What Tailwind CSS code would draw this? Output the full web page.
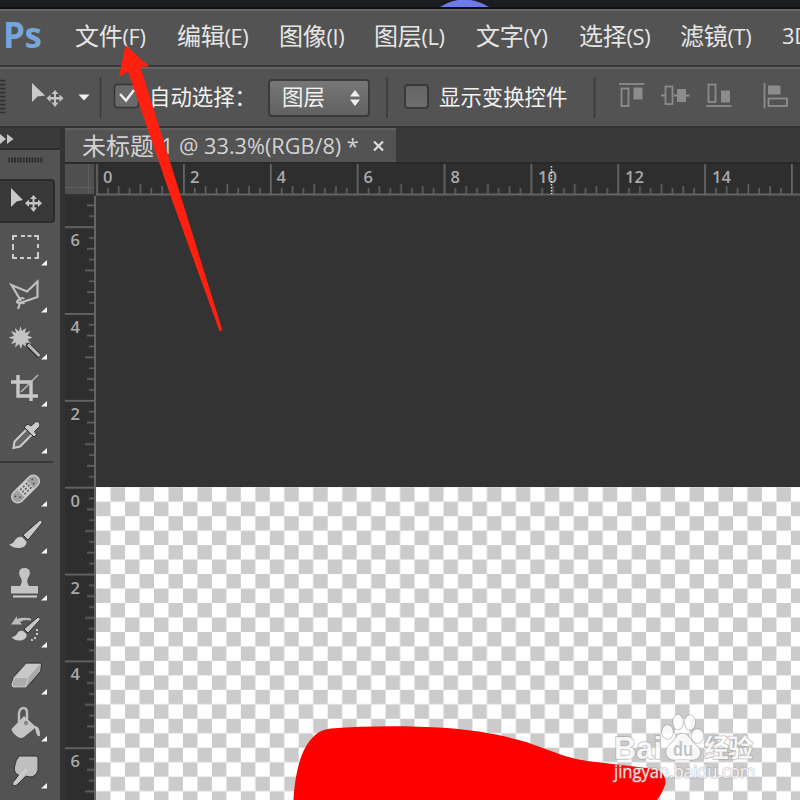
<!DOCTYPE html>
<html lang="zh-CN">
<head>
  <meta charset="UTF-8" />
  <meta name="viewport" content="width=device-width, initial-scale=1.0" />
  <title>未标题-1 @ 33.3%(RGB/8)</title>
  <script src="https://cdn.jsdelivr.net/npm/@tailwindcss/browser@4"></script>
</head>
<body class="relative w-[800px] h-[800px] overflow-hidden bg-[#535353] font-['Open_Sans','Noto_Sans_CJK_SC',sans-serif] text-[#e6e6e6] flex flex-col">

  <!-- Desktop edge above the window -->
  <div class="h-[9px] shrink-0 bg-[#1b1c20] border-b-2 border-[#111]">
    <svg class="w-full h-[7px] block" viewBox="0 0 800 7">
      <path d="M440 7Q464-8 489 7z" fill="#6c7be8" />
    </svg>
  </div>

  <!-- Menu bar -->
  <header class="h-[58px] shrink-0 border-t-2 border-t-[#666] border-b-2 border-b-[#383838] flex items-center whitespace-nowrap text-[21.8px] leading-[30px] tracking-[-0.3px]">
    <div class="w-[75px] pl-[3px] pb-1.5 shrink-0 font-['Open_Sans'] font-bold text-[35px] tracking-[-0.5px] text-[#75a5da]">Ps</div>
    <nav class="flex pb-1">
      <a class="w-[102px]"><span class="text-[24px]">文件</span>(F)</a>
      <a class="w-[102px]"><span class="text-[24px]">编辑</span>(E)</a>
      <a class="w-[95px]"><span class="text-[24px]">图像</span>(I)</a>
      <a class="w-[102px]"><span class="text-[24px]">图层</span>(L)</a>
      <a class="w-[103px]"><span class="text-[24px]">文字</span>(Y)</a>
      <a class="w-[101px]"><span class="text-[24px]">选择</span>(S)</a>
      <a class="w-[102px]"><span class="text-[24px]">滤镜</span>(T)</a>
      <a>3D</a>
    </nav>
  </header>

  <!-- Options bar -->
  <section class="h-[61px] shrink-0 border-t-2 border-t-[#636363] border-b-2 border-b-[#333] flex items-center whitespace-nowrap text-[21.4px] leading-[30px] text-[#f2f2f2]">
    <svg class="w-[149px] h-[57px] shrink-0" viewBox="0 69 149 57">
      <path d="M0 80.500h5.500M0 84.500h5.500M0 88.500h5.500M0 92.500h5.500M0 96.500h5.500M0 100.500h5.500M0 104.500h5.500M0 108.500h5.500M0 112.500h5.500" stroke="#2f2f2f" stroke-width="1.500" />
      <path d="M32 83V102L37.500 96.500L45 95.500z" fill="#c9c9c9" />
      <path d="M55 90L51.500 94H54V97H50.500V94.500L46.500 98.300L50.500 102V99.500H54V102.500H51.500L55 107L58.500 102.500H56V99.500H59.500V102L63.500 98.300L59.500 94.500V97H56V94H58.500z" fill="#c4c4c4" />
      <path d="M78.500 94.500h11l-5.500 6z" fill="#eee" />
      <path d="M100.500 77v41" stroke="#3a3a3a" stroke-width="1.500" />
      <rect x="114.500" y="84.500" width="24" height="23" rx="3" fill="#696969" stroke="#353535" stroke-width="1.500" />
      <path d="M120 94l6 6.500L134 90" fill="none" stroke="#eee" stroke-width="2.500" />
    </svg>
    <span class="w-[119px] pb-0.5">自动选择：</span>
    <div class="w-[102px] h-[38px] rounded border-2 border-[#3b3b3b] bg-linear-to-b from-[#777] to-[#616161] flex items-center justify-between pl-3 pr-[7px]">
      <span class="pb-0.5">图层</span>
      <svg class="w-3 h-4" viewBox="0 0 12 16"><path d="M1 6.500L6 0l5 6.500zM1 9.500L6 16l5-6.500z" fill="#eee" /></svg>
    </div>
    <div class="w-0.5 h-[41px] ml-4 bg-[#3f3f3f]"></div>
    <div class="w-[25px] h-[25px] ml-4 mr-2.5 mb-0.5 rounded border-2 border-[#3a3a3a] bg-linear-to-b from-[#656565] to-[#6f6f6f]"></div>
    <span class="w-[130px] pb-0.5">显示变换控件</span>
    <svg class="w-[231px] h-[57px] shrink-0" viewBox="569 69 231 57" fill="none" stroke="#8c8c8c" stroke-width="1.800">
      <path d="M594.500 77v41" stroke="#3b3b3b" />
      <path d="M619 84h25.500" />
      <rect x="621.500" y="88.500" width="7" height="17.500" />
      <path d="M633.500 87.500h9v12h-9z" fill="#8c8c8c" stroke="none" />
      <path d="M661 95.500h4M674 95.500h3M685 95.500h4.500" />
      <rect x="665.500" y="86.500" width="7" height="17.500" />
      <path d="M677 89h9v13h-9z" fill="#8c8c8c" stroke="none" />
      <path d="M706 106h25.500" />
      <rect x="708.500" y="84.500" width="7" height="17.500" />
      <path d="M721 90.500h9v12h-9z" fill="#8c8c8c" stroke="none" />
      <path d="M764.500 83v25.500" />
      <path d="M768 85.500h12.500v9H768z" fill="#8c8c8c" stroke="none" />
      <rect x="768.500" y="98.500" width="18.500" height="7.500" />
    </svg>
  </section>

  <div class="grow flex min-h-0 bg-[#333]">

    <!-- Tool panel -->
    <aside class="w-[60px] shrink-0 mr-[5px] bg-[#535353] flex flex-col">
      <div class="h-[22px] shrink-0 bg-[#3a3a3a] border-b-2 border-[#2d2d2d]">
        <svg class="w-[60px] h-5" viewBox="0 0 60 20"><path d="M0 6l6 5-6 5zM7 6l6.500 5L7 16z" fill="#c4c4c4" /></svg>
      </div>
      <svg class="w-[60px] h-[29px] shrink-0" viewBox="0 150 60 29">
        <path d="M8.500 160h35" stroke="#2b2b2b" stroke-width="5" stroke-dasharray="1.700 1.200" />
      </svg>
      <div class="w-[55px] h-[44px] shrink-0 rounded-r bg-[#383838] border-2 border-l-0 border-[#2b2b2b]">
        <svg class="w-[53px] h-[40px]" viewBox="0 181 53 40">
          <path d="M11 188V207L16.500 201.500L23 200z" fill="#c9c9c9" />
          <path d="M33.500 195L30 199H32.500V202H29V199.500L25 203.300L29 207V204.500H32.500V207.500H30L33.500 212L37 207.500H34.500V204.500H38V207L42 203.300L38 199.500V202H34.500V199H37z" fill="#c4c4c4" />
        </svg>
      </div>
      <!-- Marquee -->
      <svg class="w-[60px] h-[47px] shrink-0" viewBox="0 223 60 47">
        <path d="M13 240V236H17M21 236h4M27.500 236h4M34 236H38V240M38 244v4M38 252v6H34.500M31 258h-4M24 258h-4M17 258H13V254M13 250v-6" fill="none" stroke="#ccc" stroke-width="2" />
        <path d="M47 260v5.500h-6z" fill="#f5f5f5" />
      </svg>
      <!-- Polygonal lasso -->
      <svg class="w-[60px] h-[47px] shrink-0" viewBox="0 270 60 47">
        <path d="M21 301L11.500 285L27 291.500L37.500 281.500V297L20 303M24 299q-1-2-4 0t-3 3q3 2 6 0l1 2M20 303l-2 6" fill="none" stroke="#c0c0c0" stroke-width="2.200" />
        <path d="M47 307v5.500h-6z" fill="#f5f5f5" />
      </svg>
      <!-- Magic wand -->
      <svg class="w-[60px] h-[47px] shrink-0" viewBox="0 317 60 47">
        <path d="M20.500 326l1.300 5L26 328l-1 5 5.500-2-3 4.500 5 2-5 2 4 4.500-6-1.500 1 5-4-3.500-1.500 5-2-5-4 3.500 1-5-5 1.500 3-4.500-5.500-2 5.500-1.500-3-5 5 2-1-5 4 3.500z" fill="#c4c4c4" />
        <path d="M27 344L39.500 356.500" stroke="#303030" stroke-width="5" />
        <path d="M28 344.500L39.500 356" stroke="#bbb" stroke-width="3" />
        <path d="M47 354v5.500h-6z" fill="#f5f5f5" />
      </svg>
      <!-- Crop -->
      <svg class="w-[60px] h-[47px] shrink-0" viewBox="0 364 60 47">
        <path d="M18 375v21h20M11 382h20v19" fill="none" stroke="#c8c8c8" stroke-width="3.400" />
        <path d="M21 392L38 375" stroke="#bbb" stroke-width="1.500" />
        <path d="M47 401v5.500h-6z" fill="#f5f5f5" />
      </svg>
      <!-- Eyedropper -->
      <svg class="w-[60px] h-[47px] shrink-0" viewBox="0 411 60 47">
        <path d="M26 430L14.500 441.500L13.500 448L20 446.500L31.500 435" fill="#666" stroke="#ccc" stroke-width="2" />
        <path d="M24 427l10 10 2.500-2.500-2-3 5-5q1.500-5-3.500-5l-5 4.500-3-2z" fill="#c9c9c9" stroke="#333" />
        <path d="M47 448v5.500h-6z" fill="#f5f5f5" />
      </svg>
      <div class="h-[7px] w-[53px] shrink-0 flex items-center"><div class="h-0.5 w-full bg-[#383838]"></div></div>
      <!-- Healing brush -->
      <svg class="w-[60px] h-[47px] shrink-0" viewBox="0 465 60 47">
        <g transform="rotate(-45 25.500 489)">
          <rect x="8.500" y="483" width="34" height="12" rx="6" fill="#a0a0a0" stroke="#ccc" stroke-width="1.500" />
          <rect x="19" y="483" width="13" height="12" fill="#cacaca" />
          <path d="M21 486h2m2 0h2m2 0h2M21 489h2m2 0h2m2 0h2M21 492h2m2 0h2m2 0h2M12 487h2M15 491h2M36 487h2M34 491h2" stroke="#555" stroke-width="1.500" />
        </g>
        <path d="M47 501v5.500h-6z" fill="#f5f5f5" />
      </svg>
      <!-- Brush -->
      <svg class="w-[60px] h-[47px] shrink-0" viewBox="0 512 60 47">
        <path d="M40 520q3 0 2 3L28 540l-5-5z" fill="#c8c8c8" stroke="#333" />
        <path d="M22 537q-4-1-7 3-2 4-6 4.500 6 5 13 3 5-2 4.500-6z" fill="#ccc" />
        <path d="M47 548v5.500h-6z" fill="#f5f5f5" />
      </svg>
      <!-- Clone stamp -->
      <svg class="w-[60px] h-[47px] shrink-0" viewBox="0 559 60 47">
        <path d="M24.500 568c-7 0-6 7-3.500 10 1.500 3 .5 6-1 8h-9v7.500h27V586h-9c-1.500-2-2.500-5-1-8 3-4 3-10-3.500-10z" fill="#c4c4c4" />
        <path d="M13 596.500h24" stroke="#d0d0d0" stroke-width="2" />
        <path d="M47 595v5.500h-6z" fill="#f5f5f5" />
      </svg>
      <!-- History brush -->
      <svg class="w-[60px] h-[47px] shrink-0" viewBox="0 606 60 47">
        <path d="M11 624.500L17 616v3q6-2 14-.5v2Q24 619 20 622l2 2.500z" fill="#bbb" />
        <path d="M38 617q3 0 2 3L28 633l-4-4z" fill="#c8c8c8" stroke="#333" />
        <path d="M23 631q-4-1-6 3-2 3-5.500 3.500 5 4.500 11 2.500 5-2 4-6z" fill="#ccc" />
        <path d="M37 629v2M37 633v2M35 637v2M31 640h2" stroke="#ccc" stroke-width="2" />
        <path d="M47 642v5.500h-6z" fill="#f5f5f5" />
      </svg>
      <!-- Eraser -->
      <svg class="w-[60px] h-[47px] shrink-0" viewBox="0 653 60 47">
        <path d="M26 663h14q2 0 1.500 3l-1 5.500L26.500 687.500h-14q-1.500-1-1-3l1.500-7z" fill="#aaa" stroke="#333" />
        <path d="M26.500 664h14L28 677.500H14.500z" fill="#c8c8c8" />
        <path d="M14.500 677.500H28l-2 9.500H13q-1.500-1-1-3z" fill="#acacac" stroke="#ccc" />
        <path d="M47 689v5.500h-6z" fill="#f5f5f5" />
      </svg>
      <!-- Paint bucket -->
      <svg class="w-[60px] h-[47px] shrink-0" viewBox="0 700 60 47">
        <path d="M11.500 729L24 716l11 10q5 0 5 10-3 1-4-4l-1-4-11 9q-3 2-6 0-6-4-6.500-8z" fill="#c4c4c4" />
        <path d="M19 722v-9q1-5 4.500-5t3.500 5v8q-1 4-1 0" fill="none" stroke="#bebebe" stroke-width="2.500" />
        <circle cx="26" cy="723" r="2.200" fill="#888" />
        <path d="M47 736v5.500h-6z" fill="#f5f5f5" />
      </svg>
      <!-- Smudge -->
      <svg class="w-[60px] h-[47px] shrink-0" viewBox="0 747 60 47">
        <path d="M19 756h17q2 0 2 2v12q-2 7-8 7l-4-1-9 9q-4 2-4.500-1l6-9q-5-2-4-8 1-7 4.500-11z" fill="#bfbfbf" stroke="#333" />
        <path d="M15 783L26 770" stroke="#ccc" stroke-width="3" stroke-linecap="round" />
        <path d="M47 783v5.500h-6z" fill="#f5f5f5" />
      </svg>
    </aside>

    <!-- Document window -->
    <main class="grow min-w-0 flex flex-col">
      <div class="h-[36px] shrink-0 bg-[#393939] border-b-2 border-[#2a2a2a] flex">
        <div class="w-[331px] bg-[#535353] border-t-2 border-[#606060] pl-[17px] flex items-center whitespace-nowrap text-[21.7px] text-[#d2d2d2] leading-[30px]">
          <span class="text-[24px]">未标题</span>
          <span class="w-[204px]">-1 @ 33.3%(RGB/8) *</span>
          <svg class="w-3.5 h-3.5 ml-3.5" viewBox="0 0 14 14"><path d="M2 2.500l9 9M11 2.500l-9 9" stroke="#ddd" stroke-width="2.200" /></svg>
        </div>
      </div>

      <!-- Horizontal ruler -->
      <div class="h-[32px] shrink-0 flex">
        <svg class="w-[31px] h-[32px] bg-[#505050] shrink-0" viewBox="0 0 31 32">
          <path d="M0 23.500h29M23.500 0v29" stroke="#6a6a6a" stroke-dasharray="1.500 1.500" />
          <path d="M30 0v32M0 31h31" stroke="#333" stroke-width="2" />
        </svg>
        <svg class="w-[704px] h-[32px] bg-[#2e2e2e]" viewBox="96 164 704 32">
          <defs>
            <pattern id="hticks" x="96.200" y="164" width="86.850" height="32" patternUnits="userSpaceOnUse">
              <path d="M.9 0v30" stroke="#6c6c6c" stroke-width="1.600" />
              <path d="M11.750 24v6M22.600 22v8M33.450 24v6M44.300 20v10M55.150 24v6M66 22v8M76.850 24v6" stroke="#626262" stroke-width="1.600" />
            </pattern>
          </defs>
          <rect x="96" y="164" width="704" height="30" fill="url(#hticks)" />
          <path d="M96 194.500h704" stroke="#646464" stroke-width="2" />
          <g fill="#aaa" font-size="16.500" font-weight="600">
            <text x="103" y="182.500">0</text>
            <text x="190" y="182.500">2</text>
            <text x="276.500" y="182.500">4</text>
            <text x="363.500" y="182.500">6</text>
            <text x="450.500" y="182.500">8</text>
            <text x="538" y="182.500">10</text>
            <text x="625" y="182.500">12</text>
            <text x="712" y="182.500">14</text>
          </g>
          <path d="M551.500 166v28" stroke="#ddd" stroke-width="1.500" stroke-dasharray="1.500 1.500" />
        </svg>
      </div>

      <div class="grow flex min-h-0">
        <!-- Vertical ruler -->
        <svg class="w-[31px] h-[604px] shrink-0 bg-[#2e2e2e]" viewBox="65 196 31 604">
          <defs>
            <pattern id="vticks" x="65" y="226.200" width="31" height="86.850" patternUnits="userSpaceOnUse">
              <path d="M0 .9h30" stroke="#6c6c6c" stroke-width="1.600" />
              <path d="M24 11.750h6M22 22.600h8M24 33.450h6M20 44.300h10M24 55.150h6M22 66h8M24 76.850h6" stroke="#626262" stroke-width="1.600" />
            </pattern>
          </defs>
          <rect x="65" y="196" width="30" height="604" fill="url(#vticks)" />
          <path d="M95 196v604" stroke="#646464" stroke-width="2" />
          <g fill="#aaa" font-size="16.500" font-weight="600">
            <text x="70.500" y="246">6</text>
            <text x="70.500" y="333">4</text>
            <text x="70.500" y="420">2</text>
            <text x="70.500" y="506.500">0</text>
            <text x="70.500" y="593.500">2</text>
            <text x="70.500" y="680">4</text>
            <text x="70.500" y="767">6</text>
          </g>
        </svg>

        <!-- Canvas -->
        <svg class="w-[704px] h-[604px] bg-[#333]" viewBox="96 196 704 604">
          <defs>
            <pattern id="checker" x="96.100" y="487.200" width="28.950" height="28.950" patternUnits="userSpaceOnUse">
              <path d="M14.475 0H28.950V14.475H14.475zM0 14.475H14.475V28.950H0z" fill="#cbcbcb" />
            </pattern>
          </defs>
          <path d="M96 487h704v313H96z" fill="#fff" />
          <path d="M96 487h704v313H96z" fill="url(#checker)" />
          <path d="M293.500 800C295 773 302 731 331 728.500C366 726 405 725.500 447 728C487 731 520 739 543 748C564 756 575 760 600 762.500L655 769C663 771 667 779 665 785Q662 794 657 800z" fill="#f00" />

          <!-- Watermark -->
          <g fill="#fff" fill-opacity=".85" stroke="#999" stroke-opacity=".6" stroke-width="1.600" paint-order="stroke">
            <text x="614" y="758.500" font-family="Liberation Sans" font-weight="bold" font-size="32" textLength="48" lengthAdjust="spacingAndGlyphs">Bai</text>
            <ellipse cx="667.500" cy="732" rx="5.500" ry="7" />
            <ellipse cx="678" cy="722" rx="5" ry="7.500" />
            <ellipse cx="690" cy="722.500" rx="5.200" ry="7.500" />
            <ellipse cx="697.500" cy="736" rx="6" ry="7" />
            <path d="M682.500 733.500c-6 0-7 6-11 9.500s-6 6-5 11 6 6.500 11 5.500h10c6 1 11 0 12.500-5s-2-7.500-6-11-5.500-10-11.500-10z" />
            <text x="704" y="757" font-weight="bold" font-size="25" textLength="49">经验</text>
            <text x="614" y="778" font-family="Open Sans" font-size="17.500" textLength="141" lengthAdjust="spacingAndGlyphs" stroke-opacity=".45">jingyan.baidu.com</text>
          </g>
          <text x="673" y="756" font-family="Liberation Sans" font-weight="bold" font-size="20" textLength="20" lengthAdjust="spacingAndGlyphs" fill="#c4c4c4">du</text>
        </svg>
      </div>
    </main>
  </div>

  <!-- Arrow pointing at the file menu -->
  <svg class="absolute left-0 top-0 w-[800px] h-[800px] pointer-events-none" viewBox="0 0 800 800">
    <path d="M125.500 45L149 66.500L140.500 67L182 200L222.500 330.500L219.500 331L172 200L128 71.500L119 77z" fill="#ff2010" />
  </svg>
</body>
</html>
